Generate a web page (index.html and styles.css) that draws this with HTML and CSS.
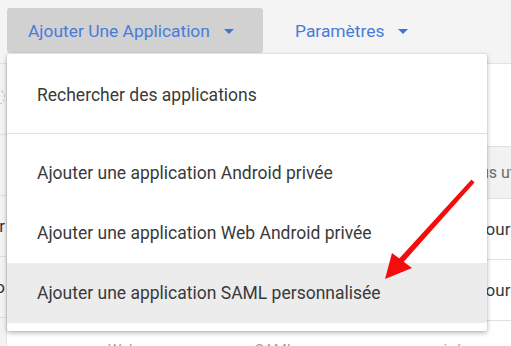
FILE: index.html
```html
<!DOCTYPE html>
<html lang="fr">
<head>
<meta charset="utf-8">
<link rel="stylesheet" href="styles.css">
</head>
<body>
<div class="page">
  <div class="topbar">
    <div class="tab tab-active">
      <span class="tab-label">Ajouter Une Application</span>
      <span class="caret"></span>
    </div>
    <div class="tab">
      <span class="tab-label">Paramètres</span>
      <span class="caret"></span>
    </div>
  </div>

  <div class="content">
    <div class="side">
      <div class="side-row side-row-first"><span class="ring"></span></div>
      <div class="side-row"></div>
      <div class="side-row"><span class="side-text">r</span></div>
      <div class="side-row"><span class="side-text">o</span></div>
    </div>
    <div class="table">
      <div class="t-row t-gap"></div>
      <div class="t-row t-head"><span class="cell">Tous utilisateurs</span></div>
      <div class="t-row"><span class="cell">Pour tous</span></div>
      <div class="t-row"><span class="cell">Pour tous</span></div>
      <div class="t-foot">
        <span class="frag frag1">Web</span>
        <span class="frag frag2">SAML</span>
        <span class="frag frag3">privée</span>
      </div>
    </div>
  </div>

  <div class="menu">
    <div class="menu-item menu-search">Rechercher des applications</div>
    <div class="menu-list">
      <div class="menu-item">Ajouter une application Android privée</div>
      <div class="menu-item">Ajouter une application Web Android privée</div>
      <div class="menu-item menu-hover">Ajouter une application SAML personnalisée</div>
    </div>
  </div>

  <svg class="arrow" width="511" height="346" viewBox="0 0 511 346">
    <polygon points="471.5,179.5 474.5,182.5 400,266 396,262" fill="#f40d0d"/>
    <polygon points="385,279 392,253 412,268" fill="#f40d0d"/>
  </svg>
</div>
</body>
</html>
```

FILE: styles.css
```css
* { box-sizing: border-box; }
html, body { margin: 0; padding: 0; }
body {
  background: #ffffff;
  font-family: Roboto, "Liberation Sans", sans-serif;
}
.page {
  position: relative;
  width: 511px;
  height: 346px;
  overflow: hidden;
}
.topbar {
  height: 64px;
  background: #f4f4f4;
  border-bottom: 1px solid #e2e2e2;
  display: flex;
  align-items: flex-start;
  padding: 8px 0 0 7px;
}
.tab {
  height: 45px;
  display: flex;
  align-items: center;
  color: #4a7bd9;
  font-size: 17.4px;
  padding: 0 0 0 32px;
}
.tab-active {
  width: 256px;
  background: #d1d1d1;
  border-radius: 3px;
  padding-left: 21px;
}
.caret {
  width: 0;
  height: 0;
  border-left: 5px solid transparent;
  border-right: 5px solid transparent;
  border-top: 5px solid #3f73d6;
  margin-left: 14px;
  margin-top: 1px;
}
.content {
  display: flex;
  height: 282px;
}
.side {
  width: 7px;
  flex: none;
  background: #f3f3f3;
  border-right: 1px solid #e4e4e4;
  overflow: hidden;
}
.side-row {
  height: 61px;
  border-bottom: 1px solid #dedede;
  display: flex;
  align-items: center;
  justify-content: flex-end;
  position: relative;
}
.side-row-first { height: 71px; }
.ring {
  position: absolute;
  right: 1px;
  top: 25px;
  width: 16px;
  height: 16px;
  border: 1px dashed #bdbdbd;
  border-radius: 50%;
}
.side-text {
  font-size: 17px;
  color: #333;
  margin-right: 1px;
}
.table {
  flex: 1;
  display: flex;
  flex-direction: column;
}
.t-row {
  height: 61px;
  border-bottom: 1px solid #e0e0e0;
  display: flex;
  align-items: center;
  flex: none;
}
.t-gap { height: 83px; }
.t-head {
  height: 52px;
  background: #f2f2f2;
}
.cell {
  margin-left: 468px;
  white-space: nowrap;
  font-size: 17px;
  color: #3a3a3a;
}
.t-head .cell { color: #6a6a6a; margin-left: 455px; font-size: 16px; }
.t-foot {
  position: relative;
  flex: 1;
}
.frag {
  position: absolute;
  top: 20px;
  font-size: 15px;
  color: #a0a0a0;
}
.frag1 { left: 101px; }
.frag2 { left: 248px; }
.frag3 { left: 423px; }
.menu {
  position: absolute;
  left: 7px;
  top: 54px;
  width: 480px;
  background: #ffffff;
  border-radius: 2px;
  box-shadow: 0 2px 5px rgba(0,0,0,0.28), 0 0 2px rgba(0,0,0,0.12);
  padding-bottom: 8px;
}
.menu-item {
  height: 60px;
  display: flex;
  align-items: center;
  padding-left: 30px;
  font-size: 17.5px;
  color: #3a3a3a;
  white-space: nowrap;
}
.menu-search {
  height: 80px;
  padding-top: 2px;
  border-bottom: 1px solid #e0e0e0;
}
.menu-list { padding-top: 9px; }
.menu-hover { background: #ececec; height: 60px; }
.arrow {
  position: absolute;
  left: 0;
  top: 0;
}
```
